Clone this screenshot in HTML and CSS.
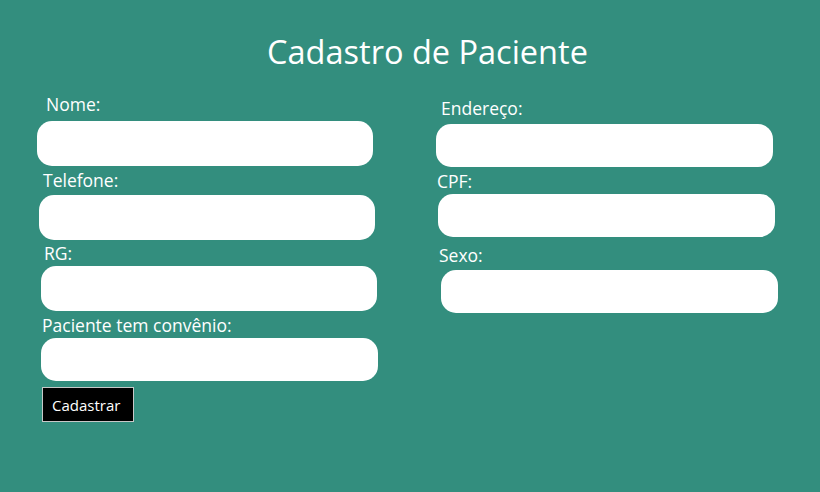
FILE: index.html
```html
<!DOCTYPE html>
<html lang="pt-BR">
<head>
<meta charset="utf-8">
<title>Cadastro de Paciente</title>
<link rel="stylesheet" href="styles.css">
</head>
<body>
<main class="page">
  <h1 class="title">Cadastro de Paciente</h1>
  <form class="form">
    <div class="col col-left">
      <div class="field f-nome">
        <label class="label" for="nome">Nome:</label>
        <input class="input" id="nome" type="text">
      </div>
      <div class="field f-tel">
        <label class="label" for="tel">Telefone:</label>
        <input class="input" id="tel" type="text">
      </div>
      <div class="field f-rg">
        <label class="label" for="rg">RG:</label>
        <input class="input" id="rg" type="text">
      </div>
      <div class="field f-conv">
        <label class="label" for="conv">Paciente tem convênio:</label>
        <input class="input" id="conv" type="text">
      </div>
      <button class="btn" type="button">Cadastrar</button>
    </div>
    <div class="col col-right">
      <div class="field f-end">
        <label class="label" for="end">Endereço:</label>
        <input class="input" id="end" type="text">
      </div>
      <div class="field f-cpf">
        <label class="label" for="cpf">CPF:</label>
        <input class="input" id="cpf" type="text">
      </div>
      <div class="field f-sexo">
        <label class="label" for="sexo">Sexo:</label>
        <input class="input" id="sexo" type="text">
      </div>
    </div>
  </form>
</main>
</body>
</html>
```
FILE: styles.css
```css
* { box-sizing: border-box; }
html, body {
  margin: 0;
  padding: 0;
}
body {
  background: #338e7e;
  font-family: "Open Sans", "Noto Sans", sans-serif;
  color: #fff;
  width: 820px;
  height: 492px;
  overflow: hidden;
}
.page {
  padding-top: 32px;
}
.title {
  margin: 0;
  font-size: 32.5px;
  line-height: 40px;
  font-weight: 400;
  text-align: center;
  padding-left: 35px;
}
.form {
  display: grid;
  grid-template-columns: 400px 420px;
}
.col {
  display: flex;
  flex-direction: column;
  align-items: flex-start;
}
.col-left { padding-top: 22px; }
.col-right { padding-top: 26px; }
.field {
  display: flex;
  flex-direction: column;
  align-items: flex-start;
}
.label {
  display: block;
  font-size: 17.5px;
  line-height: 20px;
}
.input {
  display: block;
  width: 337px;
  height: 44px;
  border: none;
  border-radius: 15px;
  background: #fff;
  outline: none;
  padding: 0 12px;
  font: inherit;
}

/* left column */
.f-nome .label { margin-left: 46px; }
.f-nome .input { margin-left: 37px; margin-top: 7px; height: 45px; width: 336px; }
.f-tel { margin-top: 4px; }
.f-tel .label { margin-left: 43px; }
.f-tel .input { margin-left: 39px; margin-top: 5px; height: 45px; width: 336px; }
.f-rg { margin-top: 3px; }
.f-rg .label { margin-left: 44px; }
.f-rg .input { margin-left: 41px; margin-top: 3px; height: 45px; width: 336px; }
.f-conv { margin-top: 4px; }
.f-conv .label { margin-left: 42px; }
.f-conv .input { margin-left: 41px; margin-top: 3px; height: 43px; }

.btn {
  margin-top: 6px;
  margin-left: 42px;
  width: 92px;
  height: 35px;
  background: #000;
  color: #fff;
  border: 1px solid #c8c8c8;
  border-radius: 0;
  font-family: "Open Sans", "Noto Sans", sans-serif;
  font-size: 15px;
  text-align: left;
  padding: 0 0 0 9px;
  cursor: pointer;
}

/* right column */
.f-end .label { margin-left: 41px; }
.f-end .input { margin-left: 36px; margin-top: 6px; height: 43px; }
.f-cpf { margin-top: 4px; }
.f-cpf .label { margin-left: 37px; }
.f-cpf .input { margin-left: 38px; margin-top: 3px; height: 43px; }
.f-sexo { margin-top: 8px; }
.f-sexo .label { margin-left: 39px; }
.f-sexo .input { margin-left: 41px; margin-top: 5px; height: 43px; }
```
